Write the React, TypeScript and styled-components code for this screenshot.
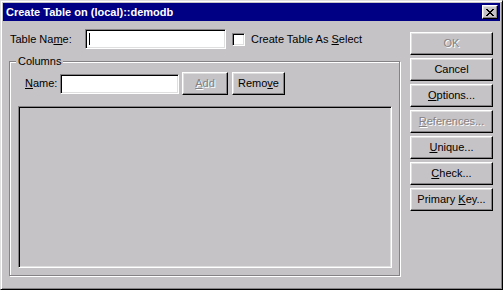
import React from 'react';
import styled, { createGlobalStyle } from 'styled-components';

const face = '#c6c3c6';
const shadow = '#848284';
const light = '#dfdfdf';

const GlobalStyle = createGlobalStyle`
  html, body {
    margin: 0;
    padding: 0;
    background: ${face};
  }
  body {
    font-family: "Liberation Sans", Arial, sans-serif;
    font-size: 11px;
    color: #000;
  }
`;

const Window = styled.div`
  width: 503px;
  height: 290px;
  box-sizing: border-box;
  padding: 2px;
  background: ${face};
  border: 1px solid;
  border-color: ${light} #000 #000 ${light};
  box-shadow: inset 1px 1px 0 #fff, inset -1px -1px 0 ${shadow};
  display: flex;
  flex-direction: column;
`;

const TitleBar = styled.div`
  height: 18px;
  background: #000084;
  display: flex;
  align-items: center;
  justify-content: space-between;
  padding: 0 2px 0 3px;
`;

const Title = styled.span`
  color: #fff;
  font-weight: bold;
  font-size: 11px;
  line-height: 13px;
`;

const CloseButton = styled.div`
  width: 16px;
  height: 14px;
  box-sizing: border-box;
  background: ${face};
  border: 1px solid;
  border-color: #fff #000 #000 #fff;
  box-shadow: inset -1px -1px 0 ${shadow}, inset 1px 1px 0 ${light};
  display: flex;
  align-items: center;
  justify-content: center;
`;

const Body = styled.div`
  flex: 1;
  display: flex;
  justify-content: space-between;
  padding: 8px 7px 0 6px;
`;

const Main = styled.div`
  width: 391px;
  display: flex;
  flex-direction: column;
`;

const Row = styled.div`
  display: flex;
  align-items: center;
`;

const Label = styled.span<{ $width?: number; $indent?: number }>`
  width: ${({ $width }) => ($width ? `${$width}px` : 'auto')};
  padding-left: ${({ $indent }) => $indent ?? 1}px;
  box-sizing: border-box;
  white-space: nowrap;
  line-height: 13px;
`;

const sunken = `
  box-sizing: border-box;
  border: 1px solid;
  border-color: ${shadow} #fff #fff ${shadow};
  box-shadow: inset 1px 1px 0 #000, inset -1px -1px 0 ${light};
`;

const TextField = styled.div<{ $width: number }>`
  ${sunken}
  width: ${({ $width }) => $width}px;
  height: 20px;
  background: #fff;
  padding: 3px 0 0 3px;
`;

const Caret = styled.div`
  width: 1px;
  height: 12px;
  background: #000;
`;

const CheckLabel = styled.label`
  display: flex;
  align-items: center;
  gap: 6px;
  margin-left: 6px;
  line-height: 13px;
  white-space: nowrap;
`;

const CheckBox = styled.span`
  ${sunken}
  width: 13px;
  height: 13px;
  background: #fff;
`;

const GroupBox = styled.fieldset`
  margin: 6px 0 0 0;
  padding: 4px 7px 7px 8px;
  min-width: 0;
  border: 1px solid ${shadow};
  box-shadow: 1px 1px 0 #fff, inset 1px 1px 0 #fff;
`;

const Legend = styled.legend`
  padding: 0 2px;
  margin-left: -2px;
  line-height: 13px;
  background: ${face};
`;

const ListArea = styled.div`
  ${sunken}
  margin-top: 11px;
  height: 162px;
  background: ${face};
`;

const Button = styled.button<{ $width?: number }>`
  width: ${({ $width }) => ($width ? `${$width}px` : '100%')};
  height: 23px;
  padding: 0;
  margin: 0;
  font: inherit;
  line-height: 13px;
  color: #000;
  background: ${face};
  border: 1px solid;
  border-color: #fff #000 #000 #fff;
  box-shadow: inset -1px -1px 0 ${shadow}, inset 1px 1px 0 ${light};
  text-align: center;
  white-space: nowrap;

  &:disabled {
    color: ${shadow};
    text-shadow: 1px 1px 0 #fff;
  }
`;

const NameRow = styled(Row)`
  gap: 0;
  & > ${Button} {
    margin-left: 4px;
  }
  & > ${Button}:first-of-type {
    margin-left: 3px;
  }
`;

const ButtonColumn = styled.div`
  width: 83px;
  margin-top: 3px;
  display: flex;
  flex-direction: column;
  gap: 3px;
`;

const CloseGlyph = () => (
  <svg width="8" height="7" viewBox="0 0 8 7" shapeRendering="crispEdges">
    <path
      fill="#000"
      d="M0 0h2v1H0z M6 0h2v1H6z M1 1h2v1H1z M5 1h2v1H5z M2 2h4v1H2z M3 3h2v1H3z M2 4h4v1H2z M1 5h2v1H1z M5 5h2v1H5z M0 6h2v1H0z M6 6h2v1H6z"
    />
  </svg>
);

const sideButtons: { pre: string; key: string; post: string; disabled?: boolean }[] = [
  { pre: 'OK', key: '', post: '', disabled: true },
  { pre: 'Cancel', key: '', post: '' },
  { pre: '', key: 'O', post: 'ptions...' },
  { pre: '', key: 'R', post: 'eferences...', disabled: true },
  { pre: '', key: 'U', post: 'nique...' },
  { pre: '', key: 'C', post: 'heck...' },
  { pre: 'Primary ', key: 'K', post: 'ey...' },
];

const App: React.FC = () => {
  return (
    <>
      <GlobalStyle />
      <Window>
        <TitleBar>
          <Title>Create Table on (local)::demodb</Title>
          <CloseButton>
            <CloseGlyph />
          </CloseButton>
        </TitleBar>
        <Body>
          <Main>
            <Row>
              <Label $width={76}>
                Table Na<u>m</u>e:
              </Label>
              <TextField $width={141}>
                <Caret />
              </TextField>
              <CheckLabel>
                <CheckBox />
                <span>
                  Create Table As <u>S</u>elect
                </span>
              </CheckLabel>
            </Row>
            <GroupBox>
              <Legend>Columns</Legend>
              <NameRow>
                <Label $width={42} $indent={7}>
                  <u>N</u>ame:
                </Label>
                <TextField $width={119} />
                <Button $width={46} disabled>
                  <u>A</u>dd
                </Button>
                <Button $width={53}>
                  Remo<u>v</u>e
                </Button>
              </NameRow>
              <ListArea />
            </GroupBox>
          </Main>
          <ButtonColumn>
            {sideButtons.map((b) => (
              <Button key={b.pre + b.key + b.post} disabled={b.disabled}>
                {b.pre}
                {b.key && <u>{b.key}</u>}
                {b.post}
              </Button>
            ))}
          </ButtonColumn>
        </Body>
      </Window>
    </>
  );
};

export default App;
